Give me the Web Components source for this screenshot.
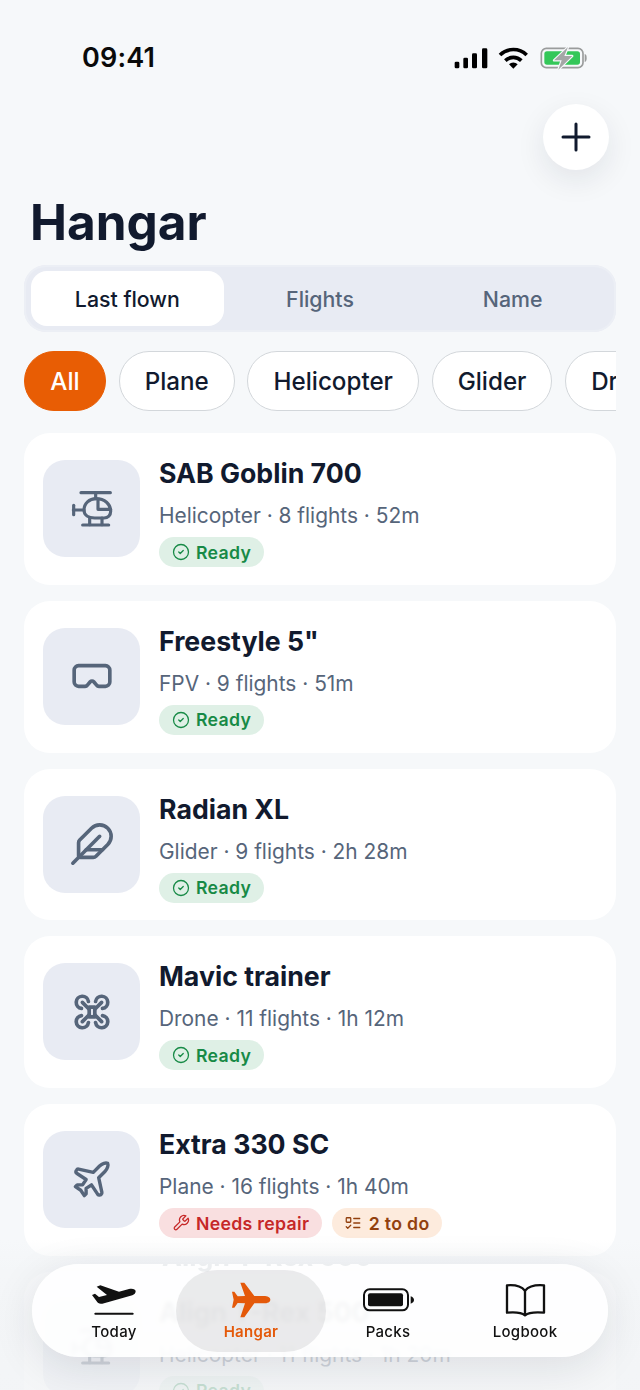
<!DOCTYPE html>
<html>
<head>
<meta charset="utf-8">
<title>Hangar</title>
<style>
  html, body { margin: 0; padding: 0; }
  body {
    width: 640px;
    height: 1390px;
    overflow: hidden;
    background: #f6f8fa;
    font-family: Inter, "Liberation Sans", sans-serif;
    color: #111a2e;
    position: relative;
  }
</style>
</head>
<body>
<status-bar></status-bar>
<hangar-header></hangar-header>
<sort-control active="Last flown" options="Last flown,Flights,Name"></sort-control>
<filter-chips active="All" options="All,Plane,Helicopter,Glider,Drone"></filter-chips>
<aircraft-list></aircraft-list>
<tab-bar></tab-bar>

<script>
const ICONS = {
  // helicopter is drawn on its own grid, nested so it fills the same 24 unit box
  helicopter: `<svg x="0" y="0" width="24" height="24" viewBox="145 168 138 138" stroke-width="9.5">
    <path d="M181 188h88"/><path d="M225 188v18"/>
    <path d="M190 240c0-20 16-34 36-34 26 0 44 16 44 38 0 12-8 20-20 20h-28c-18 0-32-8-32-24z"/>
    <path d="M232 208v30h38"/>
    <path d="M190 240h-32"/><path d="M159 226v28"/>
    <path d="M207 264v20"/><path d="M244 264v20"/><path d="M186 285h78"/>
  </svg>`,
  goggles: '<path d="M5 6.6h14a2.3 2.3 0 0 1 2.3 2.3v6.2a2.3 2.3 0 0 1-2.3 2.3h-3.4c-.5 0-.9-.2-1.2-.6l-1.5-1.8a1.2 1.2 0 0 0-1.8 0l-1.5 1.8c-.3.4-.7.6-1.2.6H5a2.3 2.3 0 0 1-2.3-2.3V8.9A2.3 2.3 0 0 1 5 6.6z"/>',
  feather: '<path d="M12.67 19a2 2 0 0 0 1.416-.588l6.154-6.172a6 6 0 0 0-8.49-8.49L5.586 9.914A2 2 0 0 0 5 11.328V18a1 1 0 0 0 1 1z"/><path d="M16 8 2 22"/><path d="M17.5 15H9"/>',
  drone: '<path d="M10.4 9.2h3.2v5.6h-3.2z"/><path d="M10.4 10.4 6.5 6.5"/><path d="M9.96 6A3.5 3.5 0 1 0 6 9.96"/><path d="M13.6 10.4l3.9-3.9"/><path d="M18 9.96A3.5 3.5 0 1 0 14.04 6"/><path d="M13.6 13.6l3.9 3.9"/><path d="M14.04 18A3.5 3.5 0 1 0 18 14.04"/><path d="M10.4 13.6l-3.9 3.9"/><path d="M6 14.04A3.5 3.5 0 1 0 9.96 18"/>',
  plane: '<path d="M17.8 19.2 16 11l3.5-3.5C21 6 21.5 4 21 3c-1-.5-3 0-4.5 1.5L13 8 4.8 6.2c-.5-.1-.9.1-1.1.5l-.3.5c-.2.5-.1 1 .3 1.3L9 12l-2 3H4l-1 1 3 2 2 3 1-1v-3l3-2 3.5 5.3c.3.4.8.5 1.3.3l.5-.2c.4-.3.6-.7.5-1.2z"/>',
  check: '<circle cx="12" cy="12" r="10"/><path d="m9 12 2 2 4-4"/>',
  wrench: '<path d="M14.7 6.3a1 1 0 0 0 0 1.4l1.6 1.6a1 1 0 0 0 1.4 0l3.77-3.77a6 6 0 0 1-7.94 7.94l-6.91 6.91a2.12 2.12 0 0 1-3-3l6.91-6.91a6 6 0 0 1 7.94-7.94l-3.76 3.76z"/>',
  todo: '<rect x="3" y="5" width="6" height="6" rx="1"/><path d="m3 17 2 2 4-4"/><path d="M13 6h8"/><path d="M13 12h8"/><path d="M13 18h8"/>'
};

function icon(name, size, width) {
  return `<svg width="${size}" height="${size}" viewBox="0 0 24 24" fill="none" stroke="currentColor"
    stroke-width="${width}" stroke-linecap="round" stroke-linejoin="round">${ICONS[name]}</svg>`;
}

class StatusBar extends HTMLElement {
  connectedCallback() {
    this.attachShadow({ mode: 'open' }).innerHTML = `
    <style>
      :host {
        display: flex;
        justify-content: space-between;
        align-items: flex-start;
        height: 104px;
        box-sizing: border-box;
        padding: 35px 40px 0 82px;
      }
      .time { margin-top: 7px; font-size: 27px; line-height: 32px; font-weight: 600; color: #0a0a0a; letter-spacing: .2px; }
      svg { display: block; }
    </style>
    <span class="time">09:41</span>
    <svg width="160" height="50" viewBox="0 0 480 150">
      <rect x="44" y="80" width="14" height="20" rx="4"/>
      <rect x="70" y="68" width="14" height="32" rx="4"/>
      <rect x="96" y="55" width="15" height="45" rx="4"/>
      <rect x="126" y="40" width="16" height="60" rx="4"/>
      <g fill="none" stroke="#000" stroke-width="11">
        <path d="M180 60a57 57 0 0 1 80 0"/>
        <path d="M196 77a34 34 0 0 1 48 0"/>
      </g>
      <path d="M220 101 207 88a18 18 0 0 1 26 0z"/>
      <rect x="304" y="40" width="125" height="58" rx="15" fill="none" stroke="#9a9c9c" stroke-width="5"/>
      <rect x="313" y="49" width="107" height="40" rx="8" fill="#34c759"/>
      <path d="M434 57c5 2 6 5 6 12s-1 10-6 12z" fill="#9a9c9c"/>
      <path d="M384 36 342 76h23l-10 28 42-41h-24z" fill="#a4a6a6" stroke="#f6f8fa" stroke-width="7" stroke-linejoin="round" paint-order="stroke"/>
    </svg>`;
  }
}

class HangarHeader extends HTMLElement {
  connectedCallback() {
    this.attachShadow({ mode: 'open' }).innerHTML = `
    <style>
      :host { display: block; padding: 0 31px 0 30px; }
      .row { display: flex; justify-content: flex-end; }
      .add {
        width: 66px;
        height: 66px;
        border-radius: 50%;
        background: #fff;
        color: #111a2e;
        display: flex;
        align-items: center;
        justify-content: center;
        box-shadow: 0 10px 30px rgba(20, 30, 50, .09);
      }
      h1 { margin: 23px 0 0; font-size: 49.5px; line-height: 59px; font-weight: 700; color: #111a2e; }
    </style>
    <div class="row">
      <div class="add">
        <svg width="32" height="32" viewBox="0 0 32 32" stroke="currentColor" stroke-width="3" stroke-linecap="round">
          <path d="M16 3v26M3 16h26"/>
        </svg>
      </div>
    </div>
    <h1>Hangar</h1>`;
  }
}

class SortControl extends HTMLElement {
  connectedCallback() {
    const active = this.getAttribute('active');
    const options = this.getAttribute('options').split(',');
    this.attachShadow({ mode: 'open' }).innerHTML = `
    <style>
      :host {
        display: grid;
        grid-template-columns: repeat(3, 1fr);
        margin: 13px 24px 0;
        padding: 6px 7px;
        border-radius: 22px;
        background: #e8ebf3;
        box-shadow: inset 0 0 0 2px #eceff5;
      }
      div {
        height: 55px;
        display: flex;
        align-items: center;
        justify-content: center;
        font-size: 21.3px;
        font-weight: 500;
        color: #56657a;
        border-radius: 16px;
      }
      .on { background: #fff; color: #111a2e; }
    </style>
    ${options.map(o => `<div class="${o === active ? 'on' : ''}">${o}</div>`).join('')}`;
  }
}

class FilterChips extends HTMLElement {
  connectedCallback() {
    const active = this.getAttribute('active');
    const options = this.getAttribute('options').split(',');
    this.attachShadow({ mode: 'open' }).innerHTML = `
    <style>
      :host {
        display: flex;
        gap: 12.7px;
        margin: 19px 24px 0;
        overflow: hidden;
      }
      div {
        flex: none;
        height: 60px;
        box-sizing: border-box;
        display: flex;
        align-items: center;
        justify-content: center;
        padding: 0 25px;
        border: 1.5px solid #d3d7db;
        border-radius: 30px;
        background: #fff;
        font-size: 24.2px;
        font-weight: 500;
        color: #111a2e;
      }
      .on { min-width: 82px; background: #e85d04; border-color: #e85d04; color: #fff; }
    </style>
    ${options.map(o => `<div class="${o === active ? 'on' : ''}">${o}</div>`).join('')}`;
  }
}

class StatusBadge extends HTMLElement {
  connectedCallback() {
    const kinds = {
      ready: ['check', '#dff0e6', '#178a46'],
      repair: ['wrench', '#f9dfe0', '#c62828'],
      todo: ['todo', '#fdebdd', '#92400e']
    };
    const [name, bg, fg] = kinds[this.getAttribute('kind')];
    this.attachShadow({ mode: 'open' }).innerHTML = `
    <style>
      :host {
        display: inline-flex;
        align-items: center;
        gap: 6.5px;
        height: 30px;
        padding: 0 12.5px;
        border-radius: 15px;
        background: ${bg};
        color: ${fg};
        font-size: 17.7px;
        font-weight: 600;
        letter-spacing: .3px;
      }
      svg { flex: none; }
    </style>
    ${icon(name, 18, 1.7)}<slot></slot>`;
  }
}

class AircraftCard extends HTMLElement {
  connectedCallback() {
    const kind = this.getAttribute('icon');
    const size = { drone: 42, plane: 43 }[kind] || 46;
    this.attachShadow({ mode: 'open' }).innerHTML = `
    <style>
      :host {
        display: flex;
        align-items: flex-start;
        gap: 19px;
        height: 151.75px;
        padding: 0 19px;
        box-sizing: border-box;
        border-radius: 26px;
        background: #fff;
      }
      .thumb {
        flex: none;
        width: 97px;
        height: 97px;
        margin-top: 27px;
        border-radius: 22px;
        background: #e8ebf3;
        color: #56657a;
        display: flex;
        align-items: center;
        justify-content: center;
      }
      .text { padding-top: 24px; min-width: 0; }
      .name { font-size: 26.7px; line-height: 32px; font-weight: 700; color: #111a2e; }
      .meta { margin-top: 13px; font-size: 20.9px; line-height: 28px; color: #56657a; }
      .tags { display: flex; gap: 10px; margin-top: 7px; }
    </style>
    <div class="thumb">${icon(kind, size, kind === 'drone' ? 2.1 : 1.9)}</div>
    <div class="text">
      <div class="name">${this.getAttribute('name')}</div>
      <div class="meta">${this.getAttribute('meta')}</div>
      <div class="tags"><slot></slot></div>
    </div>`;
  }
}

class AircraftList extends HTMLElement {
  connectedCallback() {
    const fleet = [
      { name: 'SAB Goblin 700', meta: 'Helicopter · 8 flights · 52m', icon: 'helicopter' },
      { name: 'Freestyle 5"', meta: 'FPV · 9 flights · 51m', icon: 'goggles' },
      { name: 'Radian XL', meta: 'Glider · 9 flights · 2h 28m', icon: 'feather' },
      { name: 'Mavic trainer', meta: 'Drone · 11 flights · 1h 12m', icon: 'drone' },
      { name: 'Extra 330 SC', meta: 'Plane · 16 flights · 1h 40m', icon: 'plane', tags: [['repair', 'Needs repair'], ['todo', '2 to do']] },
      { name: 'Align T-Rex 500', meta: 'Helicopter · 11 flights · 1h 20m', icon: 'helicopter' }
    ];
    const root = this.attachShadow({ mode: 'open' });
    root.innerHTML = `
    <style>
      :host { display: flex; flex-direction: column; gap: 16px; margin: 22px 24px 0; }
    </style>`;
    fleet.forEach(item => {
      const card = document.createElement('aircraft-card');
      card.setAttribute('name', item.name);
      card.setAttribute('meta', item.meta);
      card.setAttribute('icon', item.icon);
      (item.tags || [['ready', 'Ready']]).forEach(([kind, label]) => {
        const badge = document.createElement('status-badge');
        badge.setAttribute('kind', kind);
        badge.textContent = label;
        card.appendChild(badge);
      });
      root.appendChild(card);
    });
  }
}

class TabItem extends HTMLElement {
  connectedCallback() {
    const on = this.hasAttribute('active');
    this.attachShadow({ mode: 'open' }).innerHTML = `
    <style>
      :host {
        position: relative;
        display: flex;
        flex-direction: column;
        align-items: center;
        justify-content: flex-start;
        color: ${on ? '#e4590a' : '#111'};
      }
      .pill {
        position: absolute;
        top: 6px;
        bottom: 5px;
        left: -6.5px;
        right: -6.5px;
        border-radius: 41px;
        background: rgba(120, 122, 128, .15);
        display: ${on ? 'block' : 'none'};
      }
      ::slotted(svg) { position: relative; margin-top: 16px; display: block; }
      span {
        position: relative;
        font-size: 15px;
        line-height: 24px;
        font-weight: ${on ? 600 : 500};
        letter-spacing: .3px;
      }
    </style>
    <div class="pill"></div>
    <slot></slot>
    <span>${this.getAttribute('label')}</span>`;
  }
}

class TabBar extends HTMLElement {
  connectedCallback() {
    this.attachShadow({ mode: 'open' }).innerHTML = `
    <style>
      :host {
        position: absolute;
        left: 0;
        right: 0;
        top: 1210px;
        bottom: 0;
        display: block;
        background: linear-gradient(to bottom, rgba(246, 248, 250, 0) 0, rgba(246, 248, 250, 0) 30px, rgba(243, 245, 247, .66) 60px, rgba(242, 244, 246, .8) 100%);
      }
      .bar {
        position: absolute;
        left: 32px;
        right: 32px;
        top: 54px;
        height: 93px;
        padding: 0 13.5px;
        box-sizing: border-box;
        display: grid;
        grid-template-columns: repeat(4, 137px);
        border-radius: 46.5px;
        background: rgba(255, 255, 255, .87);
        backdrop-filter: blur(2px);
        box-shadow: 0 10px 44px rgba(20, 30, 50, .11);
        overflow: hidden;
      }
      .bar::before {
        content: "Align T-Rex 500";
        position: absolute;
        left: 130px;
        top: -24px;
        font-size: 26.7px;
        line-height: 32px;
        font-weight: 700;
        color: #eceef0;
      }
    </style>
    <div class="bar"><slot></slot></div>`;
    this.innerHTML = `
    <tab-item label="Today">
      <svg width="60" height="40" viewBox="-5 6 180 120" fill="#111">
        <path d="M150 40c0-7-10-9-20-7l-30 8-56-19-11 4 31 25-24 6-12-10-9 4 14 19c3 6 9 9 17 7l90-25c6-2 10-6 10-12z"/>
        <rect x="26" y="104" width="118" height="6" rx="3"/>
      </svg>
    </tab-item>
    <tab-item label="Hangar" active>
      <svg width="60" height="40" viewBox="412 6 180 120" fill="#e4590a">
        <path d="M560 65c0-7-8-11-20-11h-28l-30-40h-12l14 40-22 1-10-14h-7l5 24-5 24h7l10-14 22 1-14 42h12l30-42h28c12 0 20-4 20-11z"/>
      </svg>
    </tab-item>
    <tab-item label="Packs">
      <svg width="60" height="40" viewBox="115 90 180 120" fill="#111">
        <rect x="133" y="118" width="132" height="63" rx="17" fill="none" stroke="#111" stroke-width="6"/>
        <rect x="145" y="130" width="105" height="39" rx="6"/>
        <path d="M273 139c6 2 10 6 10 11s-4 9-10 11z"/>
      </svg>
    </tab-item>
    <tab-item label="Logbook">
      <svg width="60" height="40" viewBox="527 90 180 120" fill="none" stroke="#111" stroke-width="7" stroke-linejoin="round">
        <path d="M617 122c-12-14-32-18-54-16v82c22-2 42-2 54 8 12-10 33-10 57-8v-82c-24-2-45 2-57 16z"/>
        <path d="M617 122v74"/>
      </svg>
    </tab-item>`;
  }
}

customElements.define('status-bar', StatusBar);
customElements.define('hangar-header', HangarHeader);
customElements.define('sort-control', SortControl);
customElements.define('filter-chips', FilterChips);
customElements.define('status-badge', StatusBadge);
customElements.define('aircraft-card', AircraftCard);
customElements.define('aircraft-list', AircraftList);
customElements.define('tab-item', TabItem);
customElements.define('tab-bar', TabBar);
</script>
</body>
</html>
